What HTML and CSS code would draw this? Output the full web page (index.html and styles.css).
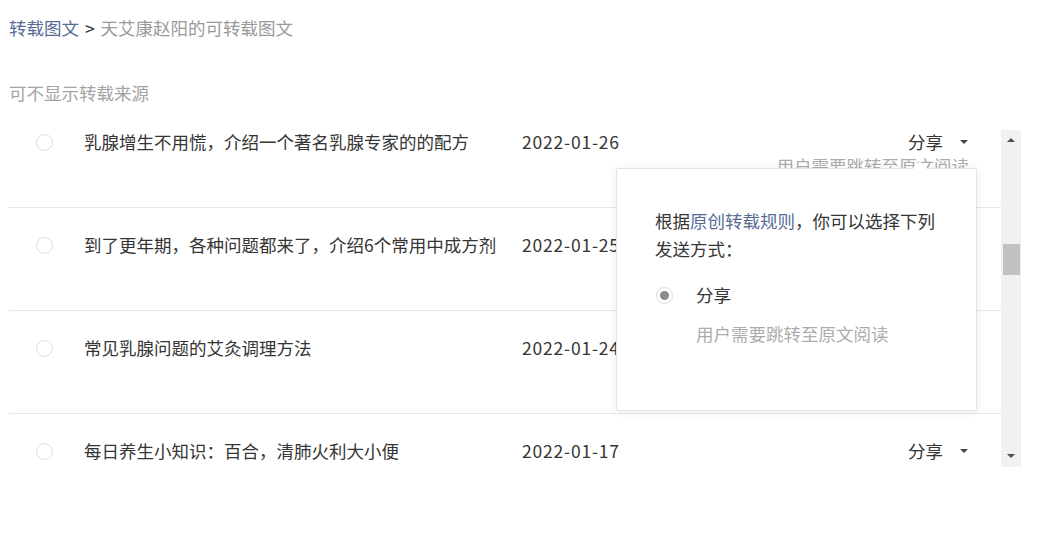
FILE: index.html
```html
<!DOCTYPE html>
<html lang="zh-CN">
<head>
    <meta charset="UTF-8">
    <title>可转载图文</title>
    <link rel="stylesheet" href="styles.css">
</head>
<body>
    <div class="page">
        <div class="crumbs">
            <a class="crumb-link">转载图文</a>
            <span class="crumb-sep">&gt;</span>
            <span class="crumb-cur">天艾康赵阳的可转载图文</span>
        </div>
        <div class="tip">可不显示转载来源</div>

        <div class="list-wrap">
            <div class="list-view">
                <div class="list">
                    <div class="row">
                        <span class="radio"></span>
                        <span class="title">乳腺增生不用慌，介绍一个著名乳腺专家的的配方</span>
                        <span class="date">2022-01-26</span>
                        <div class="share">
                            <div class="share-sel">分享<i class="caret"></i></div>
                            <div class="share-hint">用户需要跳转至原文阅读</div>
                        </div>
                    </div>
                    <div class="row">
                        <span class="radio"></span>
                        <span class="title">到了更年期，各种问题都来了，介绍6个常用中成方剂</span>
                        <span class="date">2022-01-25</span>
                        <div class="share">
                            <div class="share-sel">分享<i class="caret"></i></div>
                        </div>
                    </div>
                    <div class="row">
                        <span class="radio"></span>
                        <span class="title">常见乳腺问题的艾灸调理方法</span>
                        <span class="date">2022-01-24</span>
                        <div class="share">
                            <div class="share-sel">分享<i class="caret"></i></div>
                        </div>
                    </div>
                    <div class="row">
                        <span class="radio"></span>
                        <span class="title">每日养生小知识：百合，清肺火利大小便</span>
                        <span class="date">2022-01-17</span>
                        <div class="share">
                            <div class="share-sel">分享<i class="caret"></i></div>
                        </div>
                    </div>
                </div>

                <!-- send-mode popover for the first row -->
                <div class="popover">
                    <i class="popover-arrow"></i>
                    <p class="popover-text">根据<a class="crumb-link">原创转载规则</a>，你可以选择下列发送方式：</p>
                    <div class="option">
                        <span class="radio radio-on"></span>
                        <span>分享</span>
                    </div>
                    <div class="option-hint">用户需要跳转至原文阅读</div>
                </div>
            </div>

            <div class="scrollbar">
                <i class="sb-up"></i>
                <div class="sb-thumb"></div>
                <i class="sb-down"></i>
            </div>
        </div>
    </div>
</body>
</html>
```

FILE: styles.css
```css
body {
    margin: 0;
    font-family: "Noto Sans CJK SC", "Microsoft YaHei", sans-serif;
    font-size: 17.5px;
    color: #353535;
    background: #fff;
}
.page {
    padding: 16px 0 0 9px;
}
.crumbs {
    line-height: 24px;
    height: 24px;
}
.crumb-link {
    color: #576b95;
    text-decoration: none;
}
.crumb-sep {
    color: #353535;
    margin: 0 2px;
}
.crumb-cur {
    color: #9a9a9a;
}
.tip {
    margin-top: 41px;
    line-height: 24px;
    color: #a3a3a3;
}
.list-wrap {
    display: flex;
    margin-top: 25px;
    width: 1012px;
    height: 337px;
}
.list-view {
    position: relative;
    width: 992px;
    overflow: hidden;
}
.list {
    margin-top: -25px;
}
.row {
    display: flex;
    align-items: flex-start;
    box-sizing: border-box;
    height: 103px;
    padding: 25px 32px 0 27px;
    border-bottom: 1px solid #e7e7e7;
    line-height: 24px;
}
.row:last-child {
    border-bottom: none;
}
.radio {
    box-sizing: border-box;
    width: 17px;
    height: 17px;
    margin-top: 4px;
    border: 1px solid #dcdcdc;
    border-radius: 50%;
    flex-shrink: 0;
}
.title {
    margin-left: 31px;
    width: 438px;
    white-space: nowrap;
}
.date {
    width: 200px;
    letter-spacing: 0.8px;
}
.share {
    margin-left: auto;
    text-align: right;
}
.share-sel {
    display: flex;
    align-items: center;
    justify-content: flex-end;
}
.caret {
    display: inline-block;
    margin-left: 17px;
    margin-right: 1px;
    border-left: 4px solid transparent;
    border-right: 4px solid transparent;
    border-top: 4px solid #444;
}
.share-hint {
    color: #acacac;
    white-space: nowrap;
}
.popover {
    position: absolute;
    left: 607px;
    top: 38px;
    width: 361px;
    height: 243px;
    box-sizing: border-box;
    padding: 38px 38px 0 38px;
    background: #fff;
    border: 1px solid #e4e4e4;
    border-radius: 2px;
    box-shadow: 0 1px 10px rgba(0, 0, 0, 0.08);
}
.popover-arrow {
    position: absolute;
    top: -6px;
    left: 298px;
    width: 10px;
    height: 10px;
    background: #fff;
    transform: rotate(45deg);
}
.popover-text {
    position: relative;
    margin: 0;
    line-height: 28px;
}
.option {
    display: flex;
    align-items: center;
    margin-top: 20px;
    line-height: 24px;
}
.option .radio {
    margin: 0 23px 0 1px;
}
.radio-on {
    display: flex;
    align-items: center;
    justify-content: center;
}
.radio-on::after {
    content: "";
    width: 9px;
    height: 9px;
    border-radius: 50%;
    background: #8a8a8a;
}
.option-hint {
    margin: 15px 0 0 41px;
    line-height: 24px;
    color: #acacac;
}
.scrollbar {
    display: flex;
    flex-direction: column;
    align-items: center;
    width: 20px;
    background: #f1f1f1;
}
.sb-up,
.sb-down {
    display: block;
    border-left: 4px solid transparent;
    border-right: 4px solid transparent;
}
.sb-up {
    margin-top: 8px;
    border-bottom: 4px solid #505050;
}
.sb-down {
    margin-top: auto;
    margin-bottom: 9px;
    border-top: 4px solid #505050;
}
.sb-thumb {
    width: 17px;
    height: 31px;
    margin-top: 102px;
    margin-left: 1px;
    background: #c1c1c1;
}
```
